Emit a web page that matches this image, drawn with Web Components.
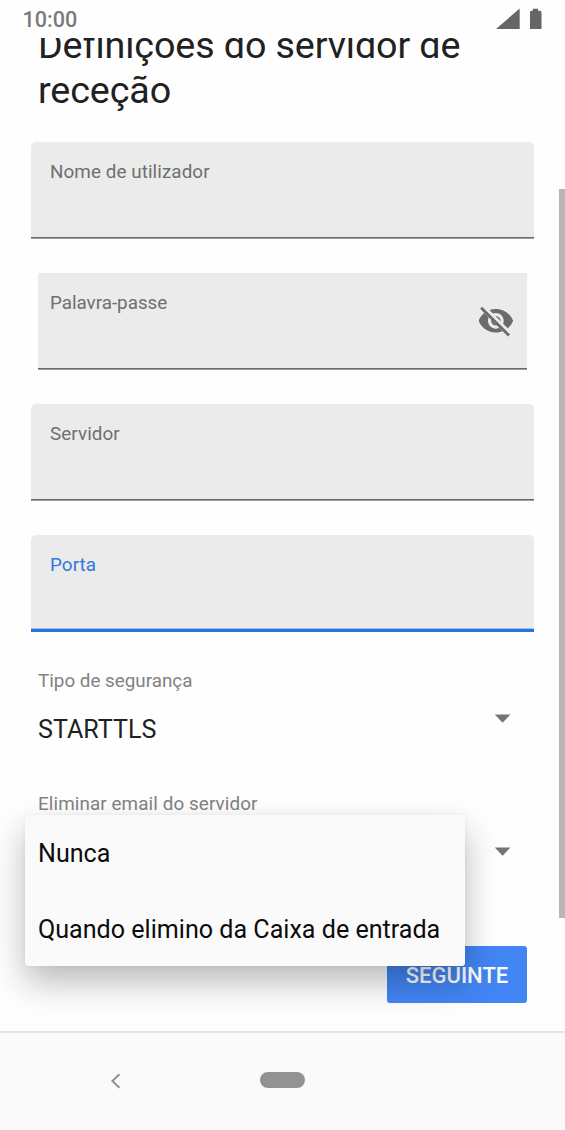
<!DOCTYPE html>
<html lang="pt">
<head>
<meta charset="utf-8">
<title>Definições do servidor de receção</title>
<style>
html,body{margin:0;height:100%;background:#fefefe;overflow:hidden}
body{font-family:Roboto,"Liberation Sans",sans-serif;color:#212121}
</style>
</head>
<body>
<mail-setup-screen></mail-setup-screen>
<script>
function define(name, markup, init) {
  const template = document.createElement('template');
  template.innerHTML = markup;
  customElements.define(name, class extends HTMLElement {
    constructor() {
      super();
      this.attachShadow({ mode: 'open' }).append(template.content.cloneNode(true));
      if (init) init(this.shadowRoot);
    }
  });
}

define('status-bar', `
<style>
:host{display:flex;height:38px;box-sizing:border-box;padding:0 23px 0 22.5px;justify-content:space-between;align-items:flex-start;color:#666;background:#fefefe}
.time{font-size:21.6px;font-weight:500;line-height:25px;padding-top:7px;letter-spacing:0;color:#7a7a7a}
.icons{display:flex;gap:9px;padding-top:8px}
svg{display:block}
</style>
<span class="time"><slot></slot></span>
<div class="icons">
<svg width="25" height="21" viewBox="0 0 25 21"><path fill="#666" d="M24.7 .5V21H1z"/></svg>
<svg width="13" height="21" viewBox="0 0 13 21"><path fill="#666" d="M3.8 .8h5.2v1.9h1.9q1.6 0 1.6 1.5V21H1V4.2q0-1.5 1.5-1.5h1.3z"/></svg>
</div>`);

define('text-field', `
<style>
:host{display:block;box-sizing:border-box;height:97px;margin:0 31.5px 34px 31px;padding:17px 19px 0;background:linear-gradient(#67696c,#67696c) 0 95px/100% 1px no-repeat,linear-gradient(#9c9d9f,#9c9d9f) 0 96px/100% 1px no-repeat,#ebebeb;border-radius:5px 5px 0 0;color:#6d6f72}
:host([inset]){margin-left:38px;margin-right:38px;padding:17px 12.5px 0 12px;border-radius:0}
:host([focused]){background:linear-gradient(#9fc0ec,#9fc0ec) 0 93px/100% 1px no-repeat,linear-gradient(#2475dc,#2475dc) 0 94px/100% 3px no-repeat,#ebebeb;color:#2f7ae0}
.row{display:flex;justify-content:space-between}
.label{font-size:18.84px;line-height:26px;letter-spacing:var(--label-spacing,.08px)}
</style>
<div class="row"><span class="label"><slot></slot></span><slot name="end"></slot></div>`);

define('hidden-eye', `
<style>:host{display:block;margin:12px 0 0}svg{display:block}</style>
<svg width="37.7" height="37.7" viewBox="0 0 24 24">
<defs><clipPath id="gap"><path d="M2 4.27 19.73 22 22.27 19.46 4.54 1.73V1H23V23H1V4.27z"/></clipPath></defs>
<path clip-path="url(#gap)" fill="#6b6b6b" d="M12 4.5C7 4.5 2.73 7.61 1 12c1.73 4.39 6 7.5 11 7.5s9.27-3.11 11-7.5c-1.73-4.39-6-7.5-11-7.5zM12 17c-2.76 0-5-2.24-5-5s2.24-5 5-5 5 2.24 5 5-2.24 5-5 5zM12 9c-1.66 0-3 1.34-3 3s1.34 3 3 3 3-1.34 3-3-1.34-3-3-3z"/>
<path d="M3.27 4.27 19.74 20.74" fill="none" stroke="#6b6b6b" stroke-width="1.8" stroke-linecap="square"/>
</svg>`);

define('spinner-field', `
<style>
:host{display:block;box-sizing:border-box;padding:0 54px 0 38px}
.label{font-size:18.84px;line-height:26px;letter-spacing:var(--label-spacing,0);color:#828282}
.row{display:flex;justify-content:space-between;height:97px}
.value{font-size:25.1px;line-height:32px;padding-top:20px;color:#212121}
svg{display:block;margin-top:var(--arrow-top,20px)}
</style>
<div class="label"><slot name="label"></slot></div>
<div class="row"><span class="value"><slot></slot></span>
<svg width="17" height="9" viewBox="0 0 17 9"><path fill="#747474" d="M.8 .6h15.6L8.6 8.8z"/></svg></div>`);

define('option-menu', `
<style>
:host{display:block;box-sizing:border-box;width:439.5px;height:151px;background:#fafafa;border-radius:3px;color:#0c0c0c;box-shadow:0 16px 34px rgba(0,0,0,.27),0 0 4px rgba(0,0,0,.05)}
</style><slot></slot>`);

define('menu-option', `
<style>:host{display:flex;align-items:center;box-sizing:border-box;height:75.5px;padding:2px 13px 0;font-size:25.1px;letter-spacing:0;white-space:nowrap}</style><slot></slot>`);

define('primary-button', `
<style>:host{display:flex;align-items:center;justify-content:center;box-sizing:border-box;width:140px;height:57px;padding-top:2px;border-radius:3px;background:#4285f4;color:#fff;font-size:22px;font-weight:500}</style><slot></slot>`);

define('nav-bar', `
<style>
:host{display:flex;box-sizing:border-box;height:99px;border-top:2px solid #e4e4e4;background:#fafafa;padding:39.5px 0 0 110px;align-items:flex-start}
svg{display:block}
.home{width:44.5px;height:16px;border-radius:8px;background:#929292;margin-left:138px;margin-top:-.5px}
</style>
<svg width="12" height="16" viewBox="0 0 12 16"><path d="M9.5 1.2 2.4 8l7.1 6.8" fill="none" stroke="#929292" stroke-width="2"/></svg>
<div class="home"></div>`);

define('mail-setup-screen', `
<style>
:host{display:flex;flex-direction:column;height:1130px;width:565px;background:#fefefe}
main{flex:none;height:993px;overflow:hidden;position:relative}
h1{margin:-15px 38px 0;height:119px;font-size:37.7px;line-height:45px;font-weight:400;color:#212121;white-space:nowrap;letter-spacing:-.11px}
.first{padding-top:2px}
.password{--label-spacing:-.02px}
.second{--arrow-top:30px;--label-spacing:.1px}
.actions{display:flex;justify-content:flex-end;padding:32px 38px 0}
option-menu{position:absolute;left:25px;top:777px}
.scroll{position:absolute;right:0;top:151px;width:6.3px;height:729px;background:#b6b6b6}
</style>
<status-bar>10:00</status-bar>
<main>
<h1>Definições do servidor de<br>receção</h1>
<text-field>Nome de utilizador</text-field>
<text-field class="password" inset>Palavra-passe<hidden-eye slot="end"></hidden-eye></text-field>
<text-field>Servidor</text-field>
<text-field focused>Porta</text-field>
<spinner-field class="first"><span slot="label">Tipo de segurança</span>STARTTLS</spinner-field>
<spinner-field class="second"><span slot="label">Eliminar email do servidor</span></spinner-field>
<div class="actions"><primary-button>SEGUINTE</primary-button></div>
<option-menu><menu-option>Nunca</menu-option><menu-option>Quando elimino da Caixa de entrada</menu-option></option-menu>
<div class="scroll"></div>
</main>
<nav-bar></nav-bar>`);
</script>
</body>
</html>
